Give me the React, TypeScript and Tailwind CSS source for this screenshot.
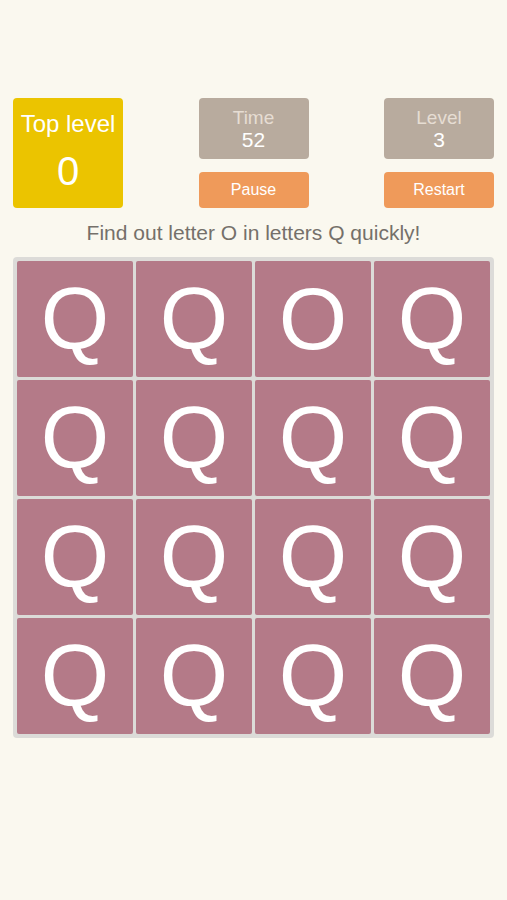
import React from "react";

const letters = [
  "Q", "Q", "O", "Q",
  "Q", "Q", "Q", "Q",
  "Q", "Q", "Q", "Q",
  "Q", "Q", "Q", "Q",
];

export default function App() {
  return (
    <div className="min-h-[900px] bg-[#faf8ef] pt-[98px] font-['Liberation_Sans',Arial,sans-serif]">
      <div className="flex justify-between px-[13px]">
        <div className="w-[110px] h-[110px] bg-[#ebc400] rounded-[4px] flex flex-col items-center text-white">
          <div className="text-[24px] leading-none mt-[14px]">Top level</div>
          <div className="text-[40px] leading-none mt-[15px]">0</div>
        </div>
        <div className="flex flex-col gap-[13px]">
          <div className="w-[110px] h-[61px] bg-[#b8ab9e] rounded-[4px] flex flex-col items-center justify-center">
            <div className="text-[19px] leading-[21px] text-[#e6ddd3]">Time</div>
            <div className="text-[21px] leading-[23px] text-white">52</div>
          </div>
          <button className="w-[110px] h-[36px] bg-[#ef9a5a] rounded-[4px] text-white text-[16px]">Pause</button>
        </div>
        <div className="flex flex-col gap-[13px]">
          <div className="w-[110px] h-[61px] bg-[#b8ab9e] rounded-[4px] flex flex-col items-center justify-center">
            <div className="text-[19px] leading-[21px] text-[#e6ddd3]">Level</div>
            <div className="text-[21px] leading-[23px] text-white">3</div>
          </div>
          <button className="w-[110px] h-[36px] bg-[#ef9a5a] rounded-[4px] text-white text-[16px]">Restart</button>
        </div>
      </div>

      <p className="text-center text-[21px] text-[#75706a] mt-[13px] leading-[24px]">
        Find out letter O in letters Q quickly!
      </p>

      <div className="mx-[13px] mt-[12px] w-[481px] bg-[#dcdbd8] rounded-[4px] p-[4px] grid grid-cols-4 gap-[3px]">
        {letters.map((l, i) => (
          <div
            key={i}
            className="h-[116px] bg-[#b47a88] rounded-[2px] flex items-center justify-center text-white text-[88px] leading-none"
          >
            {l}
          </div>
        ))}
      </div>
    </div>
  );
}
